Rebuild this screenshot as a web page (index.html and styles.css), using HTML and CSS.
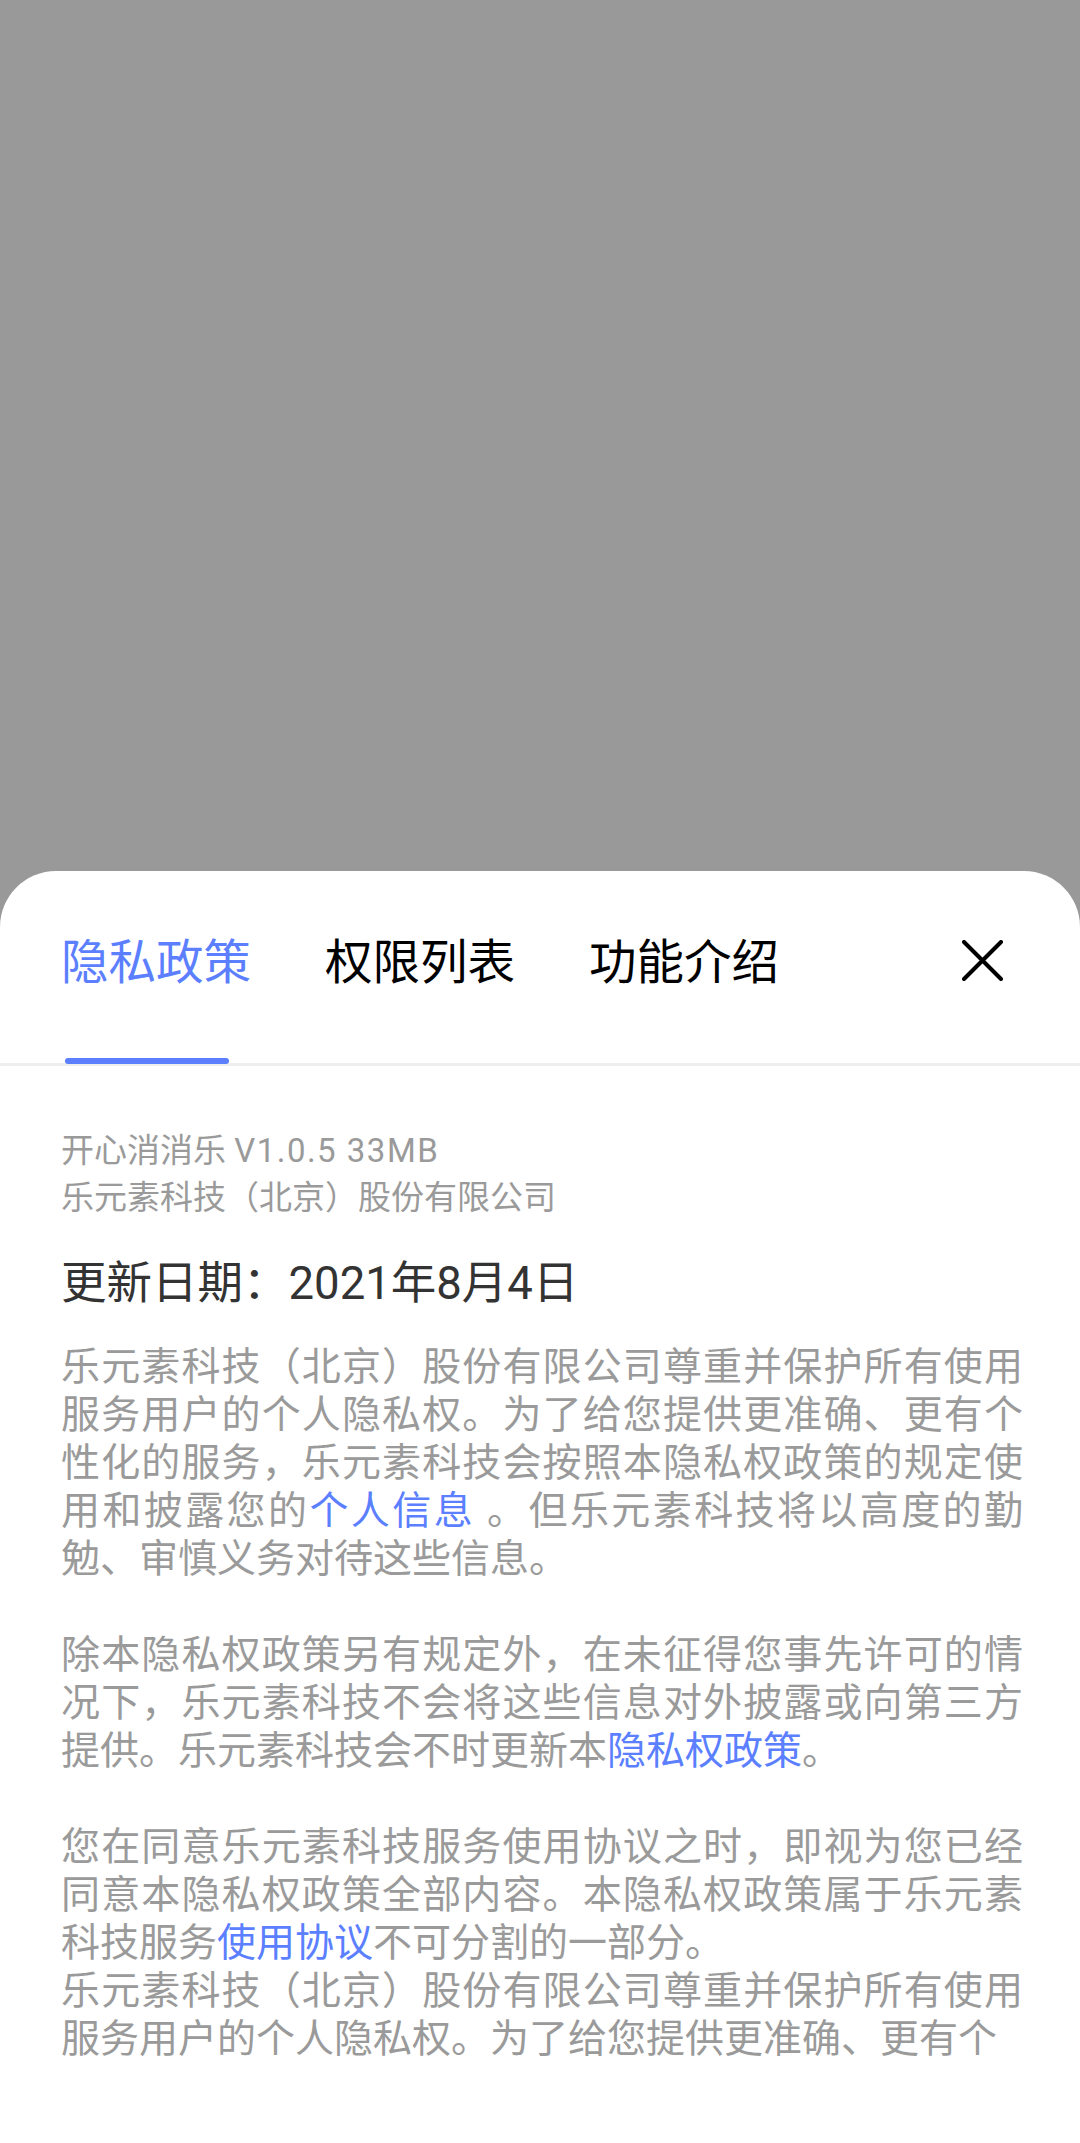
FILE: index.html
```html
<!DOCTYPE html>
<html lang="zh-CN">
<head>
<meta charset="utf-8">
<title>隐私政策</title>
<link rel="stylesheet" href="styles.css">
</head>
<body>
<div class="backdrop"></div>
<div class="sheet">
  <div class="tabbar">
    <div class="tab active">隐私政策<span class="indicator"></span></div>
    <div class="tab">权限列表</div>
    <div class="tab">功能介绍</div>
    <svg class="close" viewBox="0 0 41 41" width="41" height="41" aria-label="关闭">
      <path d="M2 2 L39 39 M39 2 L2 39" stroke="#000" stroke-width="4" stroke-linecap="round" fill="none"/>
    </svg>
  </div>
  <div class="content">
    <div class="meta">
      <div>开心消消乐 <span class="ver">V1.0.5 33MB</span></div>
      <div>乐元素科技（北京）股份有限公司</div>
    </div>
    <div class="date">更新日期：2021年8月4日</div>
    <p class="para gap">乐元素科技（北京）股份有限公司尊重并保护所有使用服务用户的个人隐私权。为了给您提供更准确、更有个性化的服务，乐元素科技会按照本隐私权政策的规定使用和披露您的<span class="link">个人信息</span> 。但乐元素科技将以高度的勤勉、审慎义务对待这些信息。</p>
    <p class="para gap">除本隐私权政策另有规定外，在未征得您事先许可的情况下，乐元素科技不会将这些信息对外披露或向第三方提供。乐元素科技会不时更新本<span class="link">隐私权政策</span>。</p>
    <p class="para">您在同意乐元素科技服务使用协议之时，即视为您已经同意本隐私权政策全部内容。本隐私权政策属于乐元素科技服务<span class="link">使用协议</span>不可分割的一部分。</p>
    <p class="para">乐元素科技（北京）股份有限公司尊重并保护所有使用服务用户的个人隐私权。为了给您提供更准确、更有个</p>
  </div>
</div>
</body>
</html>
```

FILE: styles.css
```css
* { box-sizing: border-box; }

html, body {
  margin: 0;
  padding: 0;
}

body {
  width: 1080px;
  min-height: 2143px;
  background: #999999;
  display: flex;
  flex-direction: column;
  font-family: Roboto, "Noto Sans CJK SC", sans-serif;
  overflow: hidden;
}

.backdrop {
  flex: 0 0 871px;
}

.sheet {
  flex: 1 1 auto;
  background: #ffffff;
  border-radius: 56px 56px 0 0;
}

.tabbar {
  display: flex;
  align-items: flex-start;
  height: 195px;
  padding: 68px 77px 0 61px;
  border-bottom: 3px solid #eeeeee;
}

.tab {
  position: relative;
  height: 124px;
  font-size: 47.5px;
  line-height: 48px;
  color: #000000;
  margin-right: 74px;
  white-space: nowrap;
}

.tab.active {
  color: #5b7fff;
}

.indicator {
  position: absolute;
  left: 4px;
  bottom: -1px;
  width: 164px;
  height: 6px;
  border-radius: 3px;
  background: #5b7fff;
}

.close {
  margin-left: auto;
  margin-top: 1px;
  display: block;
}

.content {
  padding: 61px 57px 0 61px;
}

.meta {
  font-size: 33px;
  line-height: 47px;
  color: #9a9a9a;
}

.ver {
  letter-spacing: 0.045em;
}

.date {
  margin-top: 33px;
  font-size: 45.5px;
  line-height: 60px;
  color: #333333;
}

.para {
  margin: 0;
  font-size: 39px;
  line-height: 48px;
  color: #9a9a9a;
  text-align: justify;
}

.date + .para {
  margin-top: 29px;
}

.para.gap {
  margin-bottom: 48px;
}

.link {
  color: #5b7fff;
}
```
